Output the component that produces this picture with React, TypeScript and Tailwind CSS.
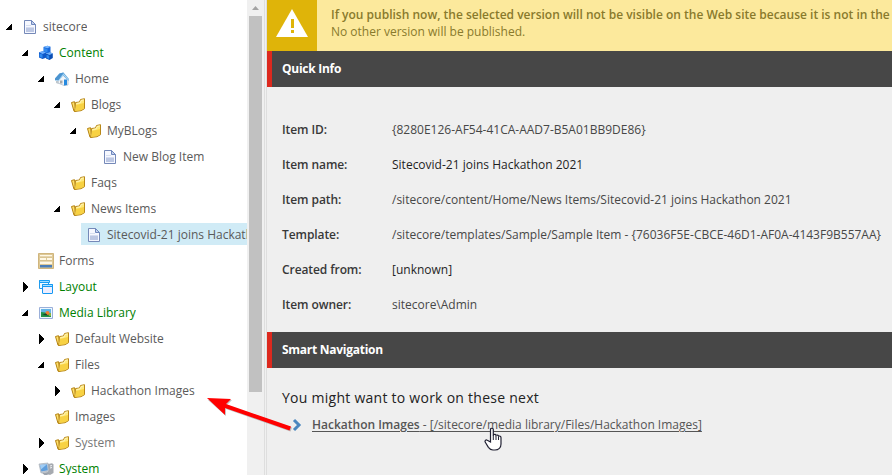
import React from "react";

type IconName = "doc" | "cubes" | "home" | "folder" | "forms" | "layout" | "media" | "computer";
type Item = {
  label: string;
  level: number;
  icon: IconName;
  state?: "open" | "closed";
  tone?: "green" | "light";
  selected?: boolean;
};

const items: Item[] = [
  { label: "sitecore", level: 0, icon: "doc", state: "open" },
  { label: "Content", level: 1, icon: "cubes", state: "open", tone: "green" },
  { label: "Home", level: 2, icon: "home", state: "open" },
  { label: "Blogs", level: 3, icon: "folder", state: "open" },
  { label: "MyBLogs", level: 4, icon: "folder", state: "open" },
  { label: "New Blog Item", level: 5, icon: "doc" },
  { label: "Faqs", level: 3, icon: "folder" },
  { label: "News Items", level: 3, icon: "folder", state: "open" },
  { label: "Sitecovid-21 joins Hackathon 2021", level: 4, icon: "doc", selected: true },
  { label: "Forms", level: 1, icon: "forms" },
  { label: "Layout", level: 1, icon: "layout", state: "closed", tone: "green" },
  { label: "Media Library", level: 1, icon: "media", state: "open", tone: "green" },
  { label: "Default Website", level: 2, icon: "folder", state: "closed" },
  { label: "Files", level: 2, icon: "folder", state: "open" },
  { label: "Hackathon Images", level: 3, icon: "folder", state: "closed" },
  { label: "Images", level: 2, icon: "folder" },
  { label: "System", level: 2, icon: "folder", state: "closed", tone: "light" },
  { label: "System", level: 1, icon: "computer", state: "closed", tone: "green" },
];

const indents = ["pl-[6px]", "pl-[22px]", "pl-[38px]", "pl-[54px]", "pl-[70px]", "pl-[86px]"];

function TreeIcon({ name }: { name: IconName }) {
  return (
    <svg className="block h-4 w-4 shrink-0" viewBox="0 0 16 16">
      {name === "doc" && (
        <>
          <path d="M2.500 1.500h7l4 4v9h-11z" fill="#f6f8ff" stroke="#7589b8" />
          <path d="M9.500 1.500v4h4z" fill="#c5d0ea" stroke="#6f88bf" />
          <path d="M4 6.500h5" stroke="#d8dfef" />
          <path d="M4 8h8v5H4z" fill="#bcc7e3" />
          <path d="M4 8.500h8" stroke="#d5dcef" />
        </>
      )}
      {name === "cubes" && (
        <>
          <path d="M5.500 2 9.500.8l3 1V7L9.500 8.500l-4-1.500z" fill="#1769dc" />
          <path d="m5.500 2 4-1.200 3 1L9.500 3.300z" fill="#78b7ff" />
          <path d="m1 7.300 4-1 3 1.200v5.200L4.500 14 1 12.500z" fill="#0e58c8" />
          <path d="m1 7.300 4-1 3 1.200L4.600 9z" fill="#6badff" />
          <path d="m8 8.500 4-1.300 2.800 1.300V13l-3.300 2L8 13.500z" fill="#0b4fb5" />
          <path d="m8 8.500 4-1.300 2.800 1.300-3.300 1.500z" fill="#70b1fa" />
          <path d="M1.500 8.500 4.500 9.500V13l-3-1zM6 3.100l3.500 1V7.500L6 6.500zM8.500 9.800l2.700 1v3.200l-2.700-1z" fill="#318aef" />
        </>
      )}
      {name === "home" && (
        <>
          <path d="M4 8 9 4l5 5v5l-4 .5L4 12z" fill="#f3f5f8" stroke="#a3b5c5" strokeWidth=".7" />
          <path d="M1 7.500 5.500 2.500 9.500 1.500 15 8v1.500h-1L9 4.500 5 9.500H1z" fill="#6caee0" />
          <path d="m1 7.500 4.500-5 4-1L4.500 9 1 9z" fill="#4b94d0" />
          <path d="m5 9.500 4.500-6 5 5.500" fill="none" stroke="#b6dcf5" />
          <path d="M10 8.500h3V14l-3 .5z" fill="#268ae0" />
          <path d="M6 9.500h2.500v3H6z" fill="#a5a8ab" />
          <path d="M2 10h2.500v3L2 12z" fill="#bfc7cd" />
        </>
      )}
      {name === "folder" && (
        <>
          <path d="m1.500 5.500 3-.8L6 14.500l-2-.3z" fill="#ffe06a" stroke="#b58312" />
          <path d="m5.500 5.500 4-.5 1-2.500 4-.8v10l-3.500 2-6.500.8.500-3z" fill="#ffe977" stroke="#b88719" />
          <path d="m6 8 8-2v5.500l-3.500 1.700-5 .7z" fill="#f5ca31" opacity=".75" />
          <path d="m6.500 6.500 3.700-.7 1-2.400 2.500-.5" fill="none" stroke="#fff5ba" />
        </>
      )}
      {name === "forms" && (
        <>
          <path d="M.5.500h15v15H.5z" fill="#dec996" stroke="#d0b57d" />
          <path d="M2 2h12v1.500H2zM2 5h6v2H2zM9 5h5v2H9zM2 8.500h12V11H2z" fill="#fff8e5" />
          <path d="M2 12h12v2.500H2z" fill="#4b7eb9" />
          <path d="M2 4h12M2 7.800h12" stroke="#cfba8a" strokeWidth=".6" />
        </>
      )}
      {name === "layout" && (
        <>
          <path d="M1.500 1.500h9v8h-9z" fill="#eef8ff" stroke="#239bec" />
          <path d="M1.500 1.500h10v2h-10z" fill="#a3dcff" stroke="#169cf3" />
          <rect x="4.500" y="5.500" width="10" height="9" rx=".5" fill="#eeeefe" stroke="#1598f3" />
          <path d="M4.500 5.500h10v2h-10z" fill="#a9e2ff" stroke="#1598f3" />
        </>
      )}
      {name === "media" && (
        <>
          <path d="M1.500 2.500h13v11h-13z" fill="#edf7ff" stroke="#9aafd9" />
          <path d="M3 4h10v8H3z" fill="#64b4e6" />
          <path d="m3 7 4 .5 6 2.500v2H3z" fill="#239348" />
          <circle cx="9.500" cy="8" r="2" fill="#f47b32" />
          <path d="m4 10 4-1.500 2 2z" fill="#183f2a" />
          <path d="M11 8h2v3h-2z" fill="#8fb33d" />
        </>
      )}
      {name === "computer" && (
        <>
          <path d="m10 3 4-.8 1.500 1V12L12 14l-2-1z" fill="#a6aab0" />
          <path d="m1 3 9-1 1 8-8 2z" fill="#c7ced7" stroke="#9aa4ae" strokeWidth=".6" />
          <path d="m2 4 7-.8.8 6-6.500 1.300z" fill="#5f9edc" />
          <path d="m2 4 7-.8-5.800 5z" fill="#a0cdf5" />
          <path d="m4 12 6-1 2 2-5 1.500z" fill="#9ca3ad" />
          <path d="m12 5 2-.5M12 7l2-.5" stroke="#eef1f4" />
        </>
      )}
    </svg>
  );
}

function Toggle({ state }: { state?: "open" | "closed" }) {
  return (
    <svg className="block h-[10px] w-[7px] shrink-0 overflow-visible" viewBox="0 0 7 10" shapeRendering="crispEdges">
      {state === "open" && <path d="M6 1.200V8H-.8z" />}
      {state === "closed" && <path d="M1 0v10l5-5z" />}
    </svg>
  );
}

function Tree() {
  return (
    <nav className="h-[475px] w-[247px] shrink-0 overflow-hidden bg-white pt-[14px]">
      {items.map((item, i) => (
        <div key={i} className={`flex h-[26px] items-start pt-[1px] ${indents[item.level]}`}>
          <div className="flex h-[24px] w-[11px] shrink-0 items-center"><Toggle state={item.state} /></div>
          <div className={`flex h-[22px] shrink-0 items-center overflow-hidden pl-[5px] ${item.selected ? "w-[166px] bg-[#d0ebf6]" : ""}`}>
            <div className="pt-[2px]"><TreeIcon name={item.icon} /></div>
            <span className={`whitespace-nowrap pl-[5px] pt-[2px] text-[12px] leading-[22px] ${item.tone === "green" ? "text-[#008000]" : item.tone === "light" ? "text-[#777]" : "text-[#5a5a5a]"}`}>{item.label}</span>
          </div>
        </div>
      ))}
    </nav>
  );
}

function SectionHeader({ children }: { children: React.ReactNode }) {
  return (
    <h2 className="flex h-9 items-center border-l-[5px] border-[#dc291e] bg-[#474747] pl-[10px] text-[12px] font-bold tracking-[-0.27px] text-white">{children}</h2>
  );
}

const info = [
  ["Item ID:", "{8280E126-AF54-41CA-AAD7-B5A01BB9DE86}", "text-[#474747]"],
  ["Item name:", "Sitecovid-21 joins Hackathon 2021", "text-[#1f1f1f]"],
  ["Item path:", "/sitecore/content/Home/News Items/Sitecovid-21 joins Hackathon 2021", "text-[#474747]"],
  ["Template:", "/sitecore/templates/Sample/Sample Item - {76036F5E-CBCE-46D1-AF0A-4143F9B557AA}", "text-[#474747]"],
  ["Created from:", "[unknown]", "text-[#1f1f1f]"],
  ["Item owner:", "sitecore\\Admin", "text-[#474747]"],
];

export default function App() {
  return (
    <div className="relative flex h-[475px] w-[892px] overflow-hidden bg-[#efefef] font-['Open_Sans',sans-serif] text-[12px]">
      <Tree />
      <div className="flex h-full w-5 shrink-0 bg-[#f0f0f0]">
        <div className="w-[17px] pl-[2px] pt-[6px]">
          <svg className="block h-[10px] w-[13px]" viewBox="0 0 13 10"><path d="m3 4 3.500-4L10 4z" fill="#a3a3a3" /></svg>
          <div className="h-[376px] w-[13px] bg-[#c1c1c1]" />
        </div>
        <div className="w-[2px] border-l border-[#dedede]" />
        <div className="w-px bg-[#dedede]" />
      </div>
      <main className="w-[625px] shrink-0 overflow-hidden">
        <div className="flex h-[51px] bg-[#fce99c]">
          <div className="w-[50px] shrink-0 bg-[#dfb409] pl-[9px] pt-[9px]">
            <svg className="block h-[28px] w-[32px]" viewBox="0 0 32 28">
              <path d="M16 0 32 28H0z" fill="#fff" />
              <path d="M15 10h3v9h-3zM15 21h3v3h-3z" fill="#dfb409" />
            </svg>
          </div>
          <div className="whitespace-nowrap pl-[14px] pt-[6px] leading-[17px] text-[#897a2c]">
            <p className="font-semibold">If you publish now, the selected version will not be visible on the Web site because it is not in the</p>
            <p>No other version will be published.</p>
          </div>
        </div>
        <SectionHeader>Quick Info</SectionHeader>
        <dl className="h-[245px] pl-[15px] pt-[25px]">
          {info.map(([label, value, color]) => (
            <div key={label} className="flex h-[35px] items-center">
              <dt className="w-[110px] shrink-0 font-semibold tracking-[-0.08px] text-[#383838]">{label}</dt>
              <dd className={`whitespace-nowrap ${color}`}>{value}</dd>
            </div>
          ))}
        </dl>
        <SectionHeader>Smart Navigation</SectionHeader>
        <div className="pl-[15px] pt-[20px]">
          <h3 className="text-[14px] leading-5 tracking-[0.26px] text-[#222]">You might want to work on these next</h3>
          <div className="flex h-[34px] items-center">
            <svg className="ml-[10px] h-[14px] w-[10px]" viewBox="0 0 10 14"><path d="m2 2 5 5-5 5" fill="none" stroke="#4b87bf" strokeWidth="3" /></svg>
            <a className="ml-[10px] whitespace-nowrap text-[#555] underline underline-offset-2"><span className="font-semibold">Hackathon Images</span> - [/sitecore/media library/Files/Hackathon Images]</a>
          </div>
        </div>
      </main>
      <svg className="pointer-events-none absolute left-[200px] top-[388px] h-[50px] w-[100px]" viewBox="0 0 100 50">
        <path d="M7 11 31 11l-5 5 65 22.500-1.500 4L25 20v7z" transform="translate(1 1)" fill="#999" opacity=".6" />
        <path d="M7 10 31 11l-5 5 65 22.500-1.500 4L25 20v7z" fill="#f00" />
      </svg>
      <svg className="absolute left-[484px] top-[427px] h-6 w-[18px]" viewBox="0 0 18 24">
        <path d="M6.500 15V2.500C6.500.8 9.300.8 9.300 2.500v6l.3-.8c.8-.8 2.200-.3 2.400.7.900-.8 2.300-.3 2.500.8 1.200-.6 2.500.2 2.500 1.500V17c0 3.500-2.500 6-6 6H9c-2 0-3.500-1.200-4.600-2.700L1.300 15.300c-.8-1.300.5-3 2-2.100z" fill="#fff" stroke="#202032" strokeWidth="1.200" />
        <path d="M9.300 8v5M12 9v4M14.500 10v3" stroke="#202032" />
      </svg>
    </div>
  );
}
